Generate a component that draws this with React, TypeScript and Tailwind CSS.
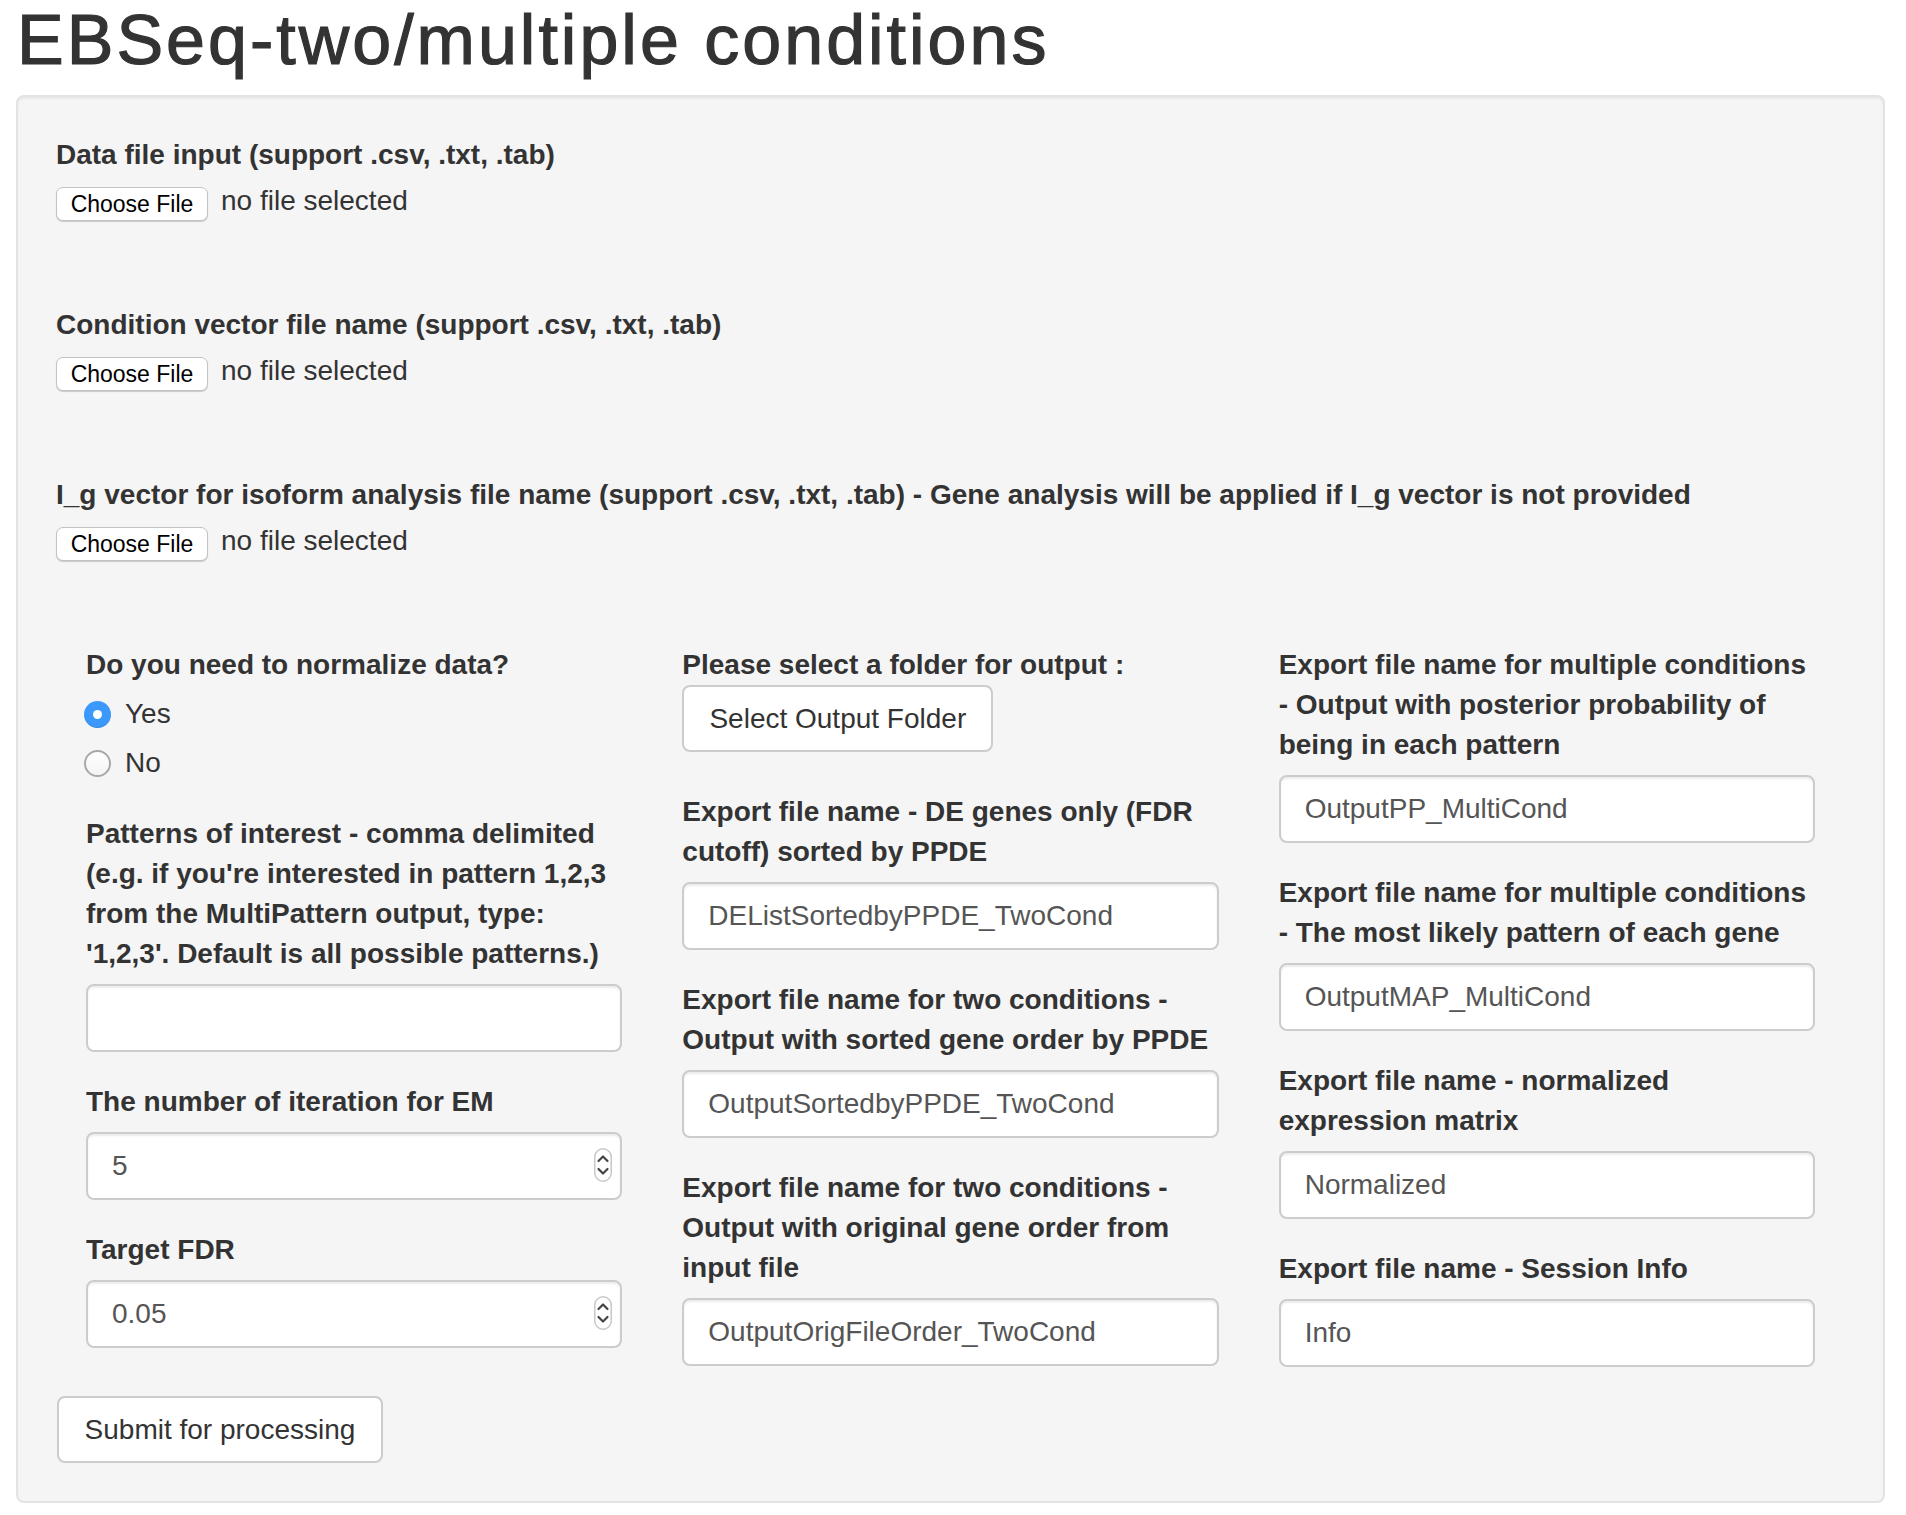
import React from 'react';

const fileInputs = [
  'Data file input (support .csv, .txt, .tab)',
  'Condition vector file name (support .csv, .txt, .tab)',
  'I_g vector for isoform analysis file name (support .csv, .txt, .tab) - Gene analysis will be applied if I_g vector is not provided',
];

// label lines are broken by hand so the wrapping matches the screenshot
const middleFields = [
  { lines: ['Export file name - DE genes only (FDR', 'cutoff) sorted by PPDE'], value: 'DEListSortedbyPPDE_TwoCond' },
  { lines: ['Export file name for two conditions -', 'Output with sorted gene order by PPDE'], value: 'OutputSortedbyPPDE_TwoCond' },
  { lines: ['Export file name for two conditions -', 'Output with original gene order from', 'input file'], value: 'OutputOrigFileOrder_TwoCond' },
];

const rightFields = [
  { lines: ['Export file name for multiple conditions', '- Output with posterior probability of', 'being in each pattern'], value: 'OutputPP_MultiCond' },
  { lines: ['Export file name for multiple conditions', '- The most likely pattern of each gene'], value: 'OutputMAP_MultiCond' },
  { lines: ['Export file name - normalized', 'expression matrix'], value: 'Normalized' },
  { lines: ['Export file name - Session Info'], value: 'Info' },
];

function Label({ lines }: { lines: string[] }) {
  return (
    <div className="font-bold text-[28px] leading-[40px] text-[#333] whitespace-nowrap">
      {lines.map((l, i) => (
        <div key={i}>{l}</div>
      ))}
    </div>
  );
}

function TextBox({ value, spinner }: { value?: string; spinner?: boolean }) {
  return (
    <div className="relative mt-[10px]">
      <input
        readOnly
        value={value ?? ''}
        className="block w-full h-[68px] px-[24px] bg-white border-2 border-[#ccc] rounded-[8px] shadow-[inset_0_2px_2px_rgba(0,0,0,0.075)] text-[28px] text-[#555] outline-none font-['Liberation_Sans',Arial,sans-serif]"
      />
      {spinner && (
        <svg className="absolute right-[10px] top-[16px]" width="18" height="34" viewBox="0 0 18 34">
          <rect x="0.75" y="0.75" width="16.5" height="32.5" rx="8.25" fill="#fff" stroke="#c8c8c8" strokeWidth="1.5" />
          <path d="M4.5 13 L9 8.5 L13.5 13" fill="none" stroke="#444" strokeWidth="2.2" strokeLinecap="round" strokeLinejoin="round" />
          <path d="M4.5 21 L9 25.5 L13.5 21" fill="none" stroke="#444" strokeWidth="2.2" strokeLinecap="round" strokeLinejoin="round" />
        </svg>
      )}
    </div>
  );
}

function FileGroup({ label }: { label: string }) {
  return (
    <div className="pb-[84px]">
      <Label lines={[label]} />
      <div className="flex items-start mt-[12px]">
        <span className="flex items-center justify-center w-[152px] h-[34px] bg-white border border-[#c3c3c3] rounded-[7px] shadow-[0_1px_1px_rgba(0,0,0,0.18)] text-[23px] text-black">
          Choose File
        </span>
        <span className="ml-[13px] text-[28px] leading-[28px] text-[#333]">no file selected</span>
      </div>
    </div>
  );
}

function Radio({ label, checked }: { label: string; checked?: boolean }) {
  return (
    <div className="flex items-center h-[40px]">
      {checked ? (
        <span className="ml-[-2px] w-[27px] h-[27px] rounded-full bg-[#3b99fc] flex items-center justify-center shadow-[inset_0_-1px_1px_rgba(0,0,0,0.1)]">
          <span className="w-[9px] h-[9px] rounded-full bg-white" />
        </span>
      ) : (
        <span className="ml-[-2px] w-[27px] h-[27px] rounded-full bg-gradient-to-b from-white to-[#f4f4f4] border-2 border-[#a8a8a8]" />
      )}
      <span className="ml-[14px] text-[28px] text-[#333]">{label}</span>
    </div>
  );
}

export default function App() {
  return (
    <div className="min-h-screen bg-white pl-[16px] pr-[21px] font-['Liberation_Sans',Arial,sans-serif] text-[#333]">
      <h1 className="mb-[14px] pl-[1px] text-[70px] leading-[81px] font-normal tracking-[3px] text-[#333] [-webkit-text-stroke:1.2px_#333]">
        EBSeq-two/multiple conditions
      </h1>

      <div className="bg-[#f5f5f5] border-2 border-[#e3e3e3] rounded-[8px] shadow-[inset_0_2px_2px_rgba(0,0,0,0.05)] p-[38px]">
        {fileInputs.map(label => (
          <FileGroup key={label} label={label} />
        ))}

        <div className="grid grid-cols-3">
          {/* left column */}
          <div className="px-[30px]">
            <Label lines={['Do you need to normalize data?']} />
            <div className="mt-[9px] flex flex-col gap-[9px]">
              <Radio label="Yes" checked />
              <Radio label="No" />
            </div>
            <div className="mt-[31px]">
              <Label
                lines={[
                  'Patterns of interest - comma delimited',
                  "(e.g. if you're interested in pattern 1,2,3",
                  'from the MultiPattern output, type:',
                  "'1,2,3'. Default is all possible patterns.)",
                ]}
              />
              <TextBox />
            </div>
            <div className="mt-[30px]">
              <Label lines={['The number of iteration for EM']} />
              <TextBox value="5" spinner />
            </div>
            <div className="mt-[30px]">
              <Label lines={['Target FDR']} />
              <TextBox value="0.05" spinner />
            </div>
          </div>

          {/* middle column */}
          <div className="px-[30px]">
            <Label lines={['Please select a folder for output :']} />
            <button className="block w-[311px] h-[67px] bg-white border-2 border-[#ccc] rounded-[8px] text-[28px] text-[#333]">
              Select Output Folder
            </button>
            {middleFields.map((f, i) => (
              <div key={f.value} className={i === 0 ? 'mt-[40px]' : 'mt-[30px]'}>
                <Label lines={f.lines} />
                <TextBox value={f.value} />
              </div>
            ))}
          </div>

          {/* right column */}
          <div className="px-[30px]">
            {rightFields.map((f, i) => (
              <div key={f.value} className={i === 0 ? '' : 'mt-[30px]'}>
                <Label lines={f.lines} />
                <TextBox value={f.value} />
              </div>
            ))}
          </div>
        </div>

        <button className="mt-[29px] ml-[1px] block w-[326px] h-[67px] bg-white border-2 border-[#ccc] rounded-[8px] text-[28px] text-[#333]">
          Submit for processing
        </button>
      </div>
    </div>
  );
}
